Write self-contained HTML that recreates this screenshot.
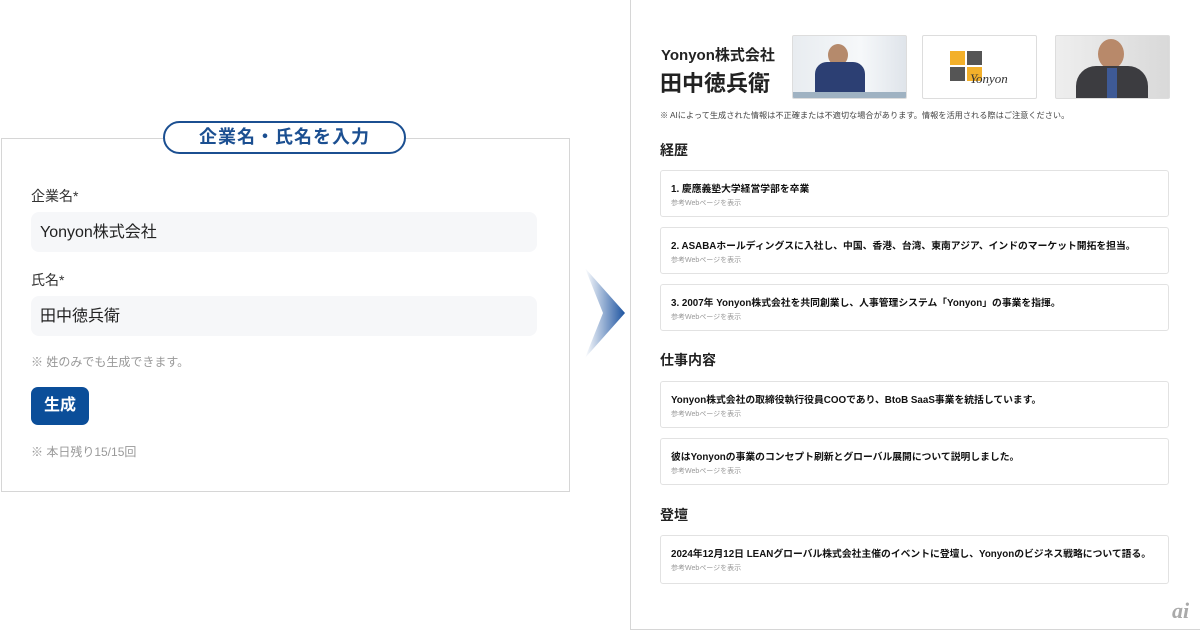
<!DOCTYPE html>
<html><head><meta charset="utf-8"><style>
*{margin:0;padding:0;box-sizing:border-box}
body{width:1200px;height:630px;background:#fff;position:relative;overflow:hidden;font-family:"Liberation Sans","Noto Sans CJK JP",sans-serif;color:#222}
.a{position:absolute;white-space:nowrap}
.lp{position:absolute;left:1px;top:138px;width:569px;height:354px;border:1px solid #d6d6d6}
.pill{position:absolute;left:163px;top:121px;width:243px;height:33px;border:2px solid #1b4f91;border-radius:17px;background:#fff;color:#1b4f91;font-size:18px;font-weight:bold;text-align:center;line-height:29px;letter-spacing:1px}
.in{position:absolute;left:31px;width:506px;height:40px;background:#f6f7f9;border-radius:8px;font-size:16px;line-height:41px;padding-left:9px;color:#222}
.lab{font-size:14px;color:#333}
.gray{font-size:12px;color:#999}
.btn{position:absolute;left:31px;top:387px;width:58px;height:38px;background:#0b4e99;border-radius:7px;color:#fff;font-size:16px;font-weight:bold;text-align:center;line-height:38px}
.rp{position:absolute;left:630px;top:0;width:570px;height:630px;border-left:1px solid #d6d6d6;border-bottom:1px solid #d6d6d6}
.card{position:absolute;left:660px;width:509px;border:1px solid #e2e2e2;border-radius:3px;background:#fff}
.card b{position:absolute;left:10px;top:10px;font-size:9.8px;white-space:nowrap;color:#111}
.card i{position:absolute;left:10px;top:27px;font-size:7px;font-style:normal;color:#999;white-space:nowrap}
.h{font-size:14px;font-weight:bold;color:#222}
.img{position:absolute;top:35px;width:115px;height:64px;border:1px solid #ddd;border-radius:2px;overflow:hidden}
</style></head><body>
<div class="lp"></div>
<div class="pill">企業名・氏名を入力</div>
<div class="a lab" style="left:31px;top:186px">企業名*</div>
<div class="in" style="top:212px">Yonyon株式会社</div>
<div class="a lab" style="left:31px;top:270px">氏名*</div>
<div class="in" style="top:296px">田中徳兵衛</div>
<div class="a gray" style="left:31px;top:353px">※ 姓のみでも生成できます。</div>
<div class="btn">生成</div>
<div class="a gray" style="left:31px;top:443px">※ 本日残り15/15回</div>
<svg class="a" style="left:583px;top:266px" width="44" height="94"><defs><linearGradient id="g" x1="0" x2="1"><stop offset="0" stop-color="#fff"/><stop offset="1" stop-color="#1c53a0"/></linearGradient></defs><polygon points="2,2 42,47 2,92 20,47" fill="url(#g)"/></svg>
<div class="rp"></div>
<div class="a" style="left:661px;top:44px;font-size:15px;font-weight:bold">Yonyon株式会社</div>
<div class="a" style="left:660px;top:66px;font-size:22px;font-weight:bold">田中徳兵衛</div>
<div class="img" style="left:792px;background:linear-gradient(90deg,#e8ecf0,#f6f8fa 60%,#dfe4ea)">
<div class="a" style="left:35px;top:8px;width:20px;height:22px;border-radius:50%;background:#b58a6c"></div>
<div class="a" style="left:22px;top:26px;width:50px;height:40px;border-radius:12px 12px 0 0;background:#2c3f73"></div>
<div class="a" style="left:0;top:56px;width:115px;height:8px;background:#9fb2c2"></div></div>
<div class="img" style="left:922px;background:#fff">
<div class="a" style="left:27px;top:15px;width:15px;height:14px;background:#f3b02a"></div>
<div class="a" style="left:44px;top:15px;width:15px;height:14px;background:#555"></div>
<div class="a" style="left:27px;top:31px;width:15px;height:14px;background:#555"></div>
<div class="a" style="left:44px;top:31px;width:15px;height:14px;background:#f3b02a"></div>
<div class="a" style="left:47px;top:35px;font-family:'Liberation Serif',serif;font-style:italic;font-size:13px;color:#333">Yonyon</div></div>
<div class="img" style="left:1055px;background:linear-gradient(90deg,#eee,#d9d9d9)">
<div class="a" style="left:42px;top:3px;width:26px;height:30px;border-radius:50%;background:#b8896a"></div>
<div class="a" style="left:20px;top:30px;width:72px;height:36px;border-radius:20px 20px 0 0;background:#3c3c40"></div>
<div class="a" style="left:51px;top:32px;width:10px;height:32px;background:#3e5a96"></div></div>
<div class="a" style="left:660px;top:109px;font-size:8.2px;color:#444">※ AIによって生成された情報は不正確または不適切な場合があります。情報を活用される際はご注意ください。</div>
<div class="a h" style="left:660px;top:140px">経歴</div>
<div class="card" style="top:170px;height:47px"><b>1. 慶應義塾大学経営学部を卒業</b><i>参考Webページを表示</i></div>
<div class="card" style="top:227px;height:47px"><b>2. ASABAホールディングスに入社し、中国、香港、台湾、東南アジア、インドのマーケット開拓を担当。</b><i>参考Webページを表示</i></div>
<div class="card" style="top:284px;height:47px"><b>3. 2007年 Yonyon株式会社を共同創業し、人事管理システム「Yonyon」の事業を指揮。</b><i>参考Webページを表示</i></div>
<div class="a h" style="left:660px;top:350px">仕事内容</div>
<div class="card" style="top:381px;height:47px"><b>Yonyon株式会社の取締役執行役員COOであり、BtoB SaaS事業を統括しています。</b><i>参考Webページを表示</i></div>
<div class="card" style="top:438px;height:47px"><b>彼はYonyonの事業のコンセプト刷新とグローバル展開について説明しました。</b><i>参考Webページを表示</i></div>
<div class="a h" style="left:660px;top:505px">登壇</div>
<div class="card" style="top:535px;height:49px"><b>2024年12月12日 LEANグローバル株式会社主催のイベントに登壇し、Yonyonのビジネス戦略について語る。</b><i>参考Webページを表示</i></div>
<div class="a" style="left:1172px;top:598px;font-family:'Liberation Serif',serif;font-style:italic;font-weight:bold;font-size:22px;color:#aaa">ai</div>
</body></html>
